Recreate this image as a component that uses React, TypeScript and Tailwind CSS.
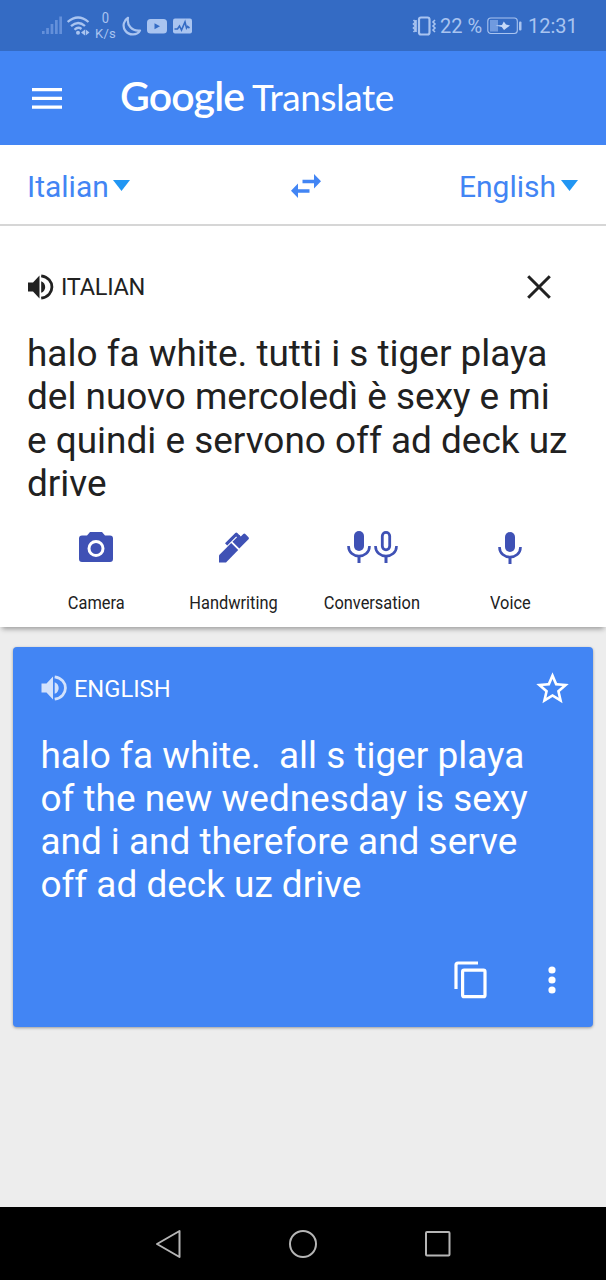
import type { ReactNode } from "react";

function StatusBar() {
  return (
    <div className="flex h-[51px] shrink-0 items-center bg-[#346bc4] pr-[28px] pl-[42px] text-[#a9c4f0]">
      <svg className="h-[20px] w-[20px]" viewBox="0 0 20 20" fill="#6490da">
        <path d="M0 15h2.600v3H0zM4.200 12h2.700v6H4.200zM8.600 8h2.700v10H8.600zM13 4h2.700v14H13zM17.300 0.500H20v17.500h-2.700z" />
      </svg>
      <svg className="ml-[5px] h-[20px] w-[24px]" viewBox="0 0 24 20" fill="none" stroke="currentColor" strokeWidth="2.300">
        <path d="M0.700 6Q11 -3 21.500 6M4 10.200Q11 3.800 18 10M7.500 13.700Q11 10.300 14.500 13" />
        <circle cx="11" cy="16.700" r="2" fill="currentColor" stroke="none" />
        <path d="M18 13.500v6L14 16.500zM18.700 13.500v6L22.500 16.500z" fill="currentColor" stroke="none" />
      </svg>
      <div className="ml-[4px] flex w-[21px] flex-col items-center text-[13px] leading-[15px]">
        <span className="scale-y-[1.1]">0</span>
        <span className="tracking-[0.3px]">K/s</span>
      </div>
      <svg className="ml-[6px] h-[20px] w-[20px]" viewBox="0 0 20 20" fill="none" stroke="currentColor" strokeWidth="2.200" strokeLinejoin="round">
        <path d="M6 1.800C2 4 0 10 3.200 14.500C7 20 15.500 19.500 18 14.500C10 15.500 4.500 9 6 1.800z" />
      </svg>
      <svg className="ml-[5px] h-[16px] w-[20px]" viewBox="0 0 20 16">
        <rect y="1" width="20" height="14.500" rx="3.500" fill="currentColor" />
        <path d="M7.500 5.200v6l5.500-3z" fill="#346bc4" />
      </svg>
      <svg className="ml-[6px] h-[16px] w-[19px]" viewBox="0 0 19 16">
        <rect y="0.500" width="19" height="15" rx="2" fill="currentColor" />
        <path d="M1.500 11h3l2-3 2 4 3.500-8 1.500 6 1-1.500 2 1.500" fill="none" stroke="#346bc4" strokeWidth="1.600" />
      </svg>
      <div className="ml-auto flex items-center text-[20px] leading-[24px]">
        <svg className="h-[20px] w-[25px]" viewBox="0 0 25 20" fill="none" stroke="currentColor">
          <rect x="7" y="1.500" width="10.500" height="17" rx="2" strokeWidth="2.200" />
          <path d="M1.500 4l2 2-2 2 2 2-2 2 2 2-2 2M4 4v12M23 4l-2 2 2 2-2 2 2 2-2 2 2 2" strokeWidth="1.600" />
        </svg>
        <span className="ml-[3px] w-[42px] whitespace-nowrap">22 %</span>
        <svg className="ml-[5px] h-[18px] w-[35px]" viewBox="0 0 35 18">
          <rect x="0.800" y="1" width="29.500" height="15.500" rx="3" fill="none" stroke="currentColor" strokeWidth="1.100" />
          <path d="M3 3h8v11.500H3z" fill="#709adf" />
          <path d="M8.500 8.500L15 8l1.800-3.500 2.200 3 4 1-6 4.500-2.200-3z" fill="#c6d9f8" />
          <rect x="32" y="4.500" width="2.500" height="9" rx="1" fill="currentColor" />
        </svg>
        <span className="ml-[6px] w-[50px] whitespace-nowrap">12:31</span>
      </div>
    </div>
  );
}

function Speaker({ className }: { className: string }) {
  return (
    <svg className={className} viewBox="0 0 26 26" fill="currentColor">
      <path d="M0.500 8.500h5L12 1.500v23l-6.500-7h-5z" />
      <path d="M13.700 7.200C19 9 19 17 13.700 18.800z" />
      <path d="M13.700 1.800C28 4 28 22 13.700 24.200" fill="none" stroke="currentColor" strokeWidth="2.800" />
    </svg>
  );
}

function Caret() {
  return (
    <svg className="mb-[2px] h-[11px] w-[17px]" viewBox="0 0 17 11" fill="#2196f3">
      <path d="M0 0h17L8.500 11z" />
    </svg>
  );
}

function Mic({ hollow = false }: { hollow?: boolean }) {
  return (
    <svg className="h-[34px] w-[24px]" viewBox="0 0 24 34" fill="none" stroke="#3f51b5">
      {hollow ? (
        <rect x="8.300" y="2.300" width="7.400" height="17.500" rx="3.700" strokeWidth="2.800" />
      ) : (
        <rect x="7" y="1" width="10" height="20" rx="5" fill="#3f51b5" stroke="none" />
      )}
      <path d="M1.500 16C1.500 29.500 22.500 29.500 22.500 16" strokeWidth="2.600" />
      <path d="M12 26v7" strokeWidth="3" />
    </svg>
  );
}

function Tool({ label, children }: { label: string; children: ReactNode }) {
  return (
    <div className="flex w-[138px] flex-col items-center">
      <div className="flex h-[36px] items-center">{children}</div>
      <span className="mt-[27px] scale-x-[0.91] text-[18px] leading-[22px] whitespace-nowrap text-[#212121]">{label}</span>
    </div>
  );
}

export default function App() {
  return (
    <div className="flex h-[1280px] w-[606px] flex-col overflow-hidden bg-[#ededed] font-[Roboto,sans-serif]">
      <StatusBar />
      <header className="flex h-[94px] shrink-0 items-center bg-[#4285f4] pl-[32px] text-white">
        <svg className="h-[21px] w-[30px]" viewBox="0 0 30 21" fill="currentColor">
          <path d="M0 0h30v3.200H0zM0 8.800h30V12H0zM0 17.500h30v3.200H0z" />
        </svg>
        <h1 className="ml-[58px] flex items-baseline pb-[3px] font-[Lato,sans-serif] leading-[48px] whitespace-nowrap">
          <span className="w-[132px] text-[41px] font-semibold tracking-[-0.9px]">Google</span>
          <span className="text-[37px] tracking-[-0.4px]">Translate</span>
        </h1>
      </header>
      <div className="flex h-[81px] shrink-0 items-center justify-between border-b-2 border-[#d6d6d6] bg-white pr-[28px] pl-[27px] text-[30px] text-[#4285f4]">
        <div className="flex w-[156px] items-center gap-[4px] pt-[4px]">
          <span className="leading-[36px]">Italian</span>
          <Caret />
        </div>
        <svg className="mt-[2px] ml-[7px] h-[24px] w-[30px]" viewBox="0 0 30 24" fill="currentColor">
          <path d="M11.500 5.800h11.500V0l7 7.300-7 7.200V9.200H11.500zM18.500 15.300H7V9.500L0 16.700 7 24v-5.300h11.500z" />
        </svg>
        <div className="flex w-[156px] items-center justify-end gap-[5px] pt-[4px]">
          <span className="leading-[36px]">English</span>
          <Caret />
        </div>
      </div>
      <section className="z-10 flex h-[401px] shrink-0 flex-col bg-white pt-[44px] text-[#212121] shadow-[0_4px_5px_-2px_rgba(0,0,0,0.35)]">
        <div className="flex h-[34px] items-center pr-[55px] pl-[27px]">
          <Speaker className="h-[26px] w-[27px]" />
          <span className="ml-[7px] text-[23.500px] leading-[30px] tracking-[-0.25px]">ITALIAN</span>
          <svg className="ml-auto h-[24px] w-[24px]" viewBox="0 0 24 24" fill="none" stroke="currentColor" strokeWidth="3">
            <path d="M1.200 1.200l21.600 21.600M22.800 1.200L1.200 22.800" />
          </svg>
        </div>
        <p className="mt-[28px] pl-[27px] text-[36.950px] leading-[43.3px] whitespace-nowrap">
          halo fa white. tutti i s tiger playa<br />
          del nuovo mercoledì è sexy e mi<br />
          e quindi e servono off ad deck uz<br />
          drive
        </p>
        <div className="mt-[24px] flex pl-[27px]">
          <Tool label="Camera">
            <svg className="h-[32px] w-[34px]" viewBox="0 0 34 32">
              <path d="M11 1h12l3 3.500h5q3 0 3 3V28q0 3-3 3H3q-3 0-3-3V7.500q0-3 3-3h5z" fill="#3f51b5" />
              <circle cx="17" cy="17.500" r="7" fill="none" stroke="white" strokeWidth="3" />
            </svg>
          </Tool>
          <Tool label="Handwriting">
            <svg className="h-[32px] w-[32px]" viewBox="0 0 32 32" fill="#3f51b5">
              <path d="M1 24.300L13.200 12.100l7 7L8 31.500H1z" />
              <path d="M14.500 10.800L21.300 4l1.500 1.500L25.300 3q1-1 2 0L30.500 6.200q1 1 0 2L21.300 17.600z" />
              <path d="M7 12.300L17.300 2q1-1 2 0L22 4.700 19.700 7l-1.500-1.500-9 9z" />
            </svg>
          </Tool>
          <Tool label="Conversation">
            <div className="flex gap-[3px]">
              <Mic />
              <Mic hollow />
            </div>
          </Tool>
          <Tool label="Voice">
            <div className="pt-[2px]">
              <Mic />
            </div>
          </Tool>
        </div>
      </section>
      <main className="flex grow flex-col px-[13.400px] pt-[20px]">
        <section className="flex h-[380px] flex-col rounded-[4px] bg-[#4285f4] pt-[25px] text-white shadow-[0_1px_3px_rgba(0,0,0,0.35)]">
          <div className="flex h-[34px] items-center pr-[21px] pl-[27.500px]">
            <Speaker className="mb-[2px] h-[26px] w-[26px] text-[#d3e2fc]" />
            <span className="ml-[7px] text-[23.700px] leading-[30px]">ENGLISH</span>
            <svg className="mb-[2px] ml-auto h-[39px] w-[39px]" viewBox="0 0 24 24" fill="currentColor">
              <path d="M22 9.240l-7.190-.62L12 2 9.190 8.630 2 9.240l5.460 4.730L5.820 21 12 17.270 18.180 21l-1.630-7.030L22 9.240zM12 15.400l-3.760 2.270 1-4.280-3.320-2.880 4.380-.38L12 6.100l1.710 4.040 4.380.38-3.320 2.880 1 4.280L12 15.400z" />
            </svg>
          </div>
          <p className="mt-[27.600px] pl-[27px] text-[36.950px] leading-[43.2px] whitespace-pre">
            {"halo fa white.  all s tiger playa\nof the new wednesday is sexy\nand i and therefore and serve\noff ad deck uz drive"}
          </p>
          <div className="mt-[55px] flex items-center justify-end pr-[36.500px]">
            <svg className="h-[38px] w-[34px]" viewBox="0 0 34 38" fill="none" stroke="currentColor" strokeWidth="3.200">
              <path d="M2 28V4q0-2 2-2h20" />
              <rect x="8.600" y="9.200" width="22.400" height="26.500" rx="1.500" />
            </svg>
            <svg className="ml-[60px] h-[28px] w-[8px]" viewBox="0 0 8 28" fill="currentColor">
              <circle cx="4" cy="4" r="3.600" />
              <circle cx="4" cy="14" r="3.600" />
              <circle cx="4" cy="24" r="3.600" />
            </svg>
          </div>
        </section>
      </main>
      <nav className="flex h-[73px] shrink-0 items-center bg-black pl-[156px]">
        <svg className="h-[30px] w-[25px]" viewBox="0 0 25 30" fill="none" stroke="#b5b5b5" strokeWidth="2" strokeLinejoin="round">
          <path d="M23.500 2v26L1 15z" />
        </svg>
        <svg className="ml-[107px] h-[30px] w-[30px]" viewBox="0 0 30 30" fill="none" stroke="#b5b5b5" strokeWidth="2">
          <circle cx="15" cy="15" r="13" />
        </svg>
        <svg className="ml-[106px] h-[28px] w-[28px]" viewBox="0 0 28 28" fill="none" stroke="#b5b5b5" strokeWidth="2">
          <rect x="2" y="2" width="23.500" height="23.500" rx="1" />
        </svg>
      </nav>
    </div>
  );
}
